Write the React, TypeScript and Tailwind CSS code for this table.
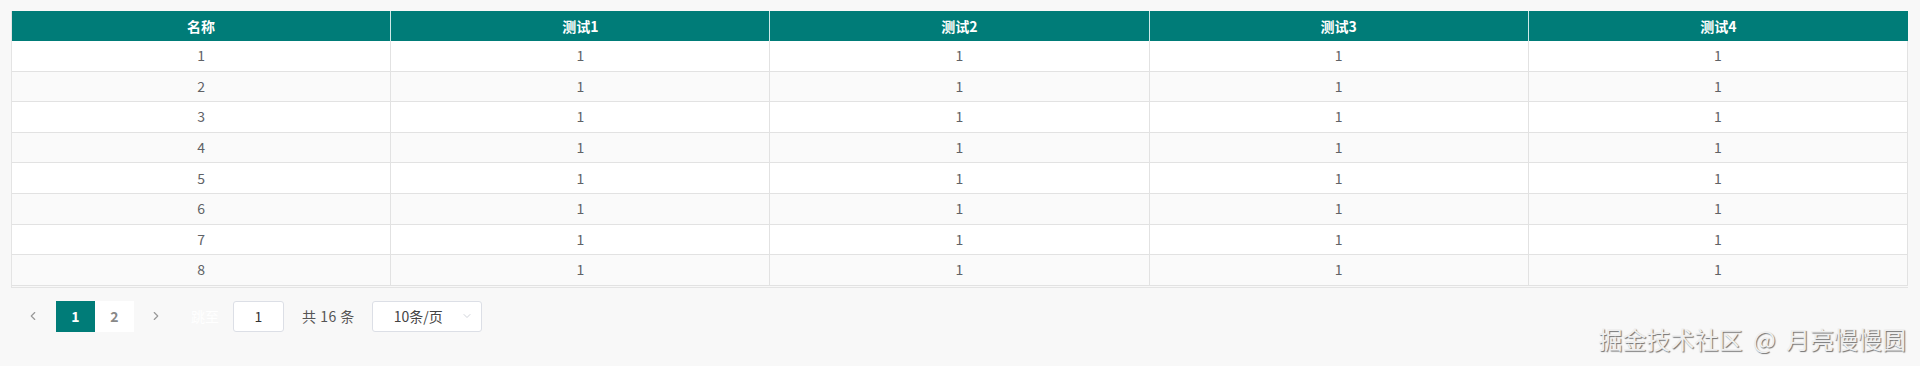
import { ChevronLeft, ChevronRight, ChevronDown } from "lucide-react";

const columns = ["名称", "测试1", "测试2", "测试3", "测试4"];
const rows = [1, 2, 3, 4, 5, 6, 7, 8];

export default function App() {
  return (
    <div
      className="relative w-[1920px] h-[366px] bg-[#f8f8f8] pt-[11px] pl-[11px] pr-[12px] text-[#606266] text-[14px]"
      style={{ fontFamily: '"Microsoft YaHei", "Noto Sans CJK SC", "Noto Sans", sans-serif' }}
    >
      {/* Table */}
      <div className="border-l border-b border-[#e4e4e4] pb-[1px]">
        <div className="grid grid-cols-5 h-[30px] bg-[#007c78] text-white font-bold">
          {columns.map((c, i) => (
            <div
              key={c}
              className={`flex items-center justify-center ${i < 4 ? "border-r border-[#cfe9e8]" : ""}`}
            >
              {c}
            </div>
          ))}
        </div>
        {rows.map((r) => (
          <div
            key={r}
            className={`grid grid-cols-5 h-[30.6px] border-b border-[#e2e2e2] ${r % 2 === 0 ? "bg-[#fafafa]" : "bg-white"}`}
          >
            {columns.map((c, i) => (
              <div
                key={c}
                className="flex items-center justify-center border-r border-[#e2e2e2]"
              >
                {i === 0 ? r : 1}
              </div>
            ))}
          </div>
        ))}
      </div>

      {/* Pagination */}
      <div className="flex items-center mt-[13px] h-[31px]">
        <button className="w-[30px] h-[31px] ml-[7px] flex items-center justify-center text-[#999]">
          <ChevronLeft size={14} strokeWidth={2} />
        </button>
        <div className="w-[39px] h-[31px] ml-[8px] bg-[#007c78] text-white font-bold flex items-center justify-center">
          1
        </div>
        <div className="w-[39px] h-[31px] bg-white text-[#888] font-bold flex items-center justify-center">
          2
        </div>
        <button className="w-[30px] h-[31px] ml-[7px] flex items-center justify-center text-[#999]">
          <ChevronRight size={14} strokeWidth={2} />
        </button>
        <span className="ml-[20px] w-[30px] text-white">跳至</span>
        <div className="ml-[12px] w-[51px] h-[31px] bg-white border border-[#dcdfe6] rounded-[3px] flex items-center justify-center text-[#333]">
          1
        </div>
        <span className="ml-[18px] text-[#555] tracking-[0.5px]">共 16 条</span>
        <div className="ml-[17px] w-[110px] h-[31px] bg-white border border-[#dcdfe6] rounded-[3px] flex items-center pl-[21px] pr-[8px] text-[#444]">
          <span className="flex-1">10条/页</span>
          <ChevronDown size={12} strokeWidth={1.5} className="text-[#c0c4cc]" />
        </div>
      </div>

      {/* Watermark */}
      <div className="absolute right-[14px] bottom-[15px] text-[24px] leading-none text-[#efefef] [word-spacing:5px] [text-shadow:1px_1px_1px_rgba(0,0,0,0.55)]">
        掘金技术社区 @ 月亮慢慢圆
      </div>
    </div>
  );
}
